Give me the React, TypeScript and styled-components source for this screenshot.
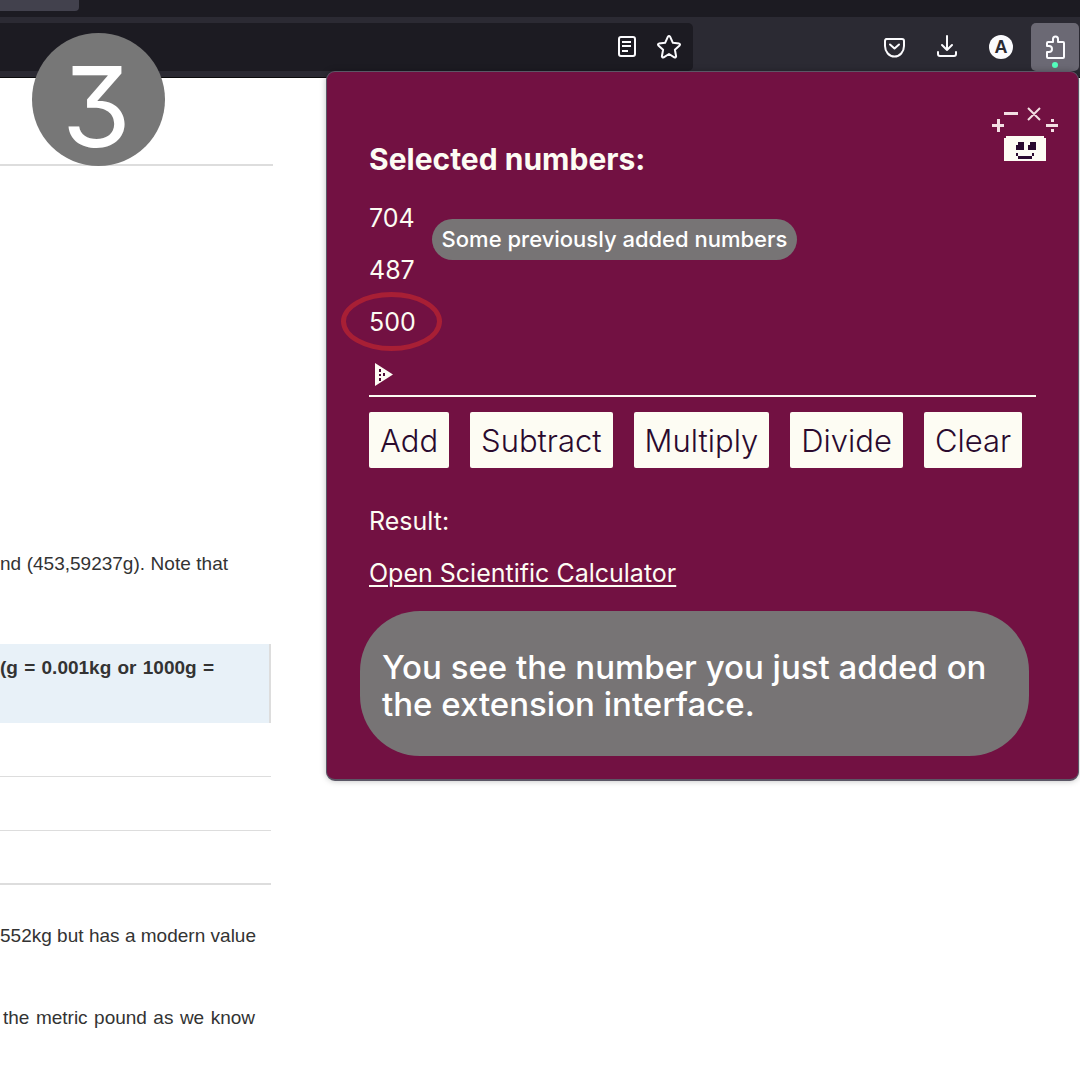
import React from "react";
import styled, { createGlobalStyle } from "styled-components";

const GlobalStyle = createGlobalStyle`
  *, *::before, *::after { box-sizing: border-box; }
  body {
    margin: 0;
    background: #ffffff;
    font-family: Inter, "Open Sans", sans-serif;
  }
  h1, p, ul { margin: 0; padding: 0; }
`;

const Browser = styled.div`
  position: relative;
  min-height: 100vh;
  overflow: hidden;
`;

const TabStrip = styled.div`
  height: 17px;
  background: #1c1b22;
`;

const ActiveTab = styled.div`
  width: 79px;
  height: 11px;
  border-radius: 0 0 4px 0;
  background: #42414d;
`;

const Toolbar = styled.header`
  display: flex;
  justify-content: space-between;
  height: 61px;
  padding: 6px 1px 6px 0;
  border-bottom: 1px solid #0c0c0d;
  background: #2b2a33;
`;

const AddressBar = styled.div`
  display: flex;
  align-items: center;
  justify-content: flex-end;
  gap: 18px;
  flex: 0 1 693px;
  height: 48px;
  padding-right: 12px;
  border-radius: 0 5px 5px 0;
  background: #1c1b22;
`;

const ToolbarActions = styled.div`
  display: flex;
  gap: 6px;
`;

const IconButton = styled.button<{ $active?: boolean; $compact?: boolean }>`
  display: flex;
  align-items: center;
  justify-content: center;
  width: ${(p) => (p.$compact ? 24 : 48)}px;
  height: 48px;
  padding: 0;
  border: 0;
  border-radius: 5px;
  background: ${(p) => (p.$active ? "#6b6974" : "transparent")};
  color: #fbfbfe;
`;

const Account = styled.span`
  display: flex;
  align-items: center;
  justify-content: center;
  width: 24px;
  height: 24px;
  border-radius: 50%;
  background: #fbfbfe;
  color: #2b2a33;
  font-size: 18px;
  font-weight: 800;
`;

const Article = styled.main`
  width: 273px;
  color: #333333;
  font-family: "Liberation Sans", Arial, sans-serif;
  font-size: 19px;
  line-height: 28px;
`;

const Masthead = styled.div`
  height: 88px;
  border-bottom: 2px solid #dddddd;
`;

const Line = styled.p<{ $space: number; $end: number; $start?: number }>`
  && {
    padding: ${(p) => p.$space}px ${(p) => p.$end}px 0 ${(p) => p.$start ?? 0}px;
  }
  text-align: justify;
  text-align-last: justify;
`;

const Callout = styled.div`
  height: 79px;
  margin: 66px 2px 0 0;
  border-right: 2px solid #dddddd;
  background: #e8f1f8;
  font-weight: 700;
`;

const Row = styled.div<{ $last?: boolean }>`
  height: 54px;
  margin-right: 2px;
  border-bottom: ${(p) => (p.$last ? 2 : 1)}px solid #dddddd;
`;

const StepBadge = styled.div`
  position: absolute;
  top: 33px;
  left: 32px;
  display: flex;
  align-items: center;
  justify-content: center;
  width: 133px;
  height: 133px;
  padding: 12px 4px 0 0;
  border-radius: 50%;
  background: #777777;
  color: #ffffff;
  font-size: 112px;
  font-weight: 400;
  line-height: 1;
  font-feature-settings: "cv09";
`;

const Popup = styled.section`
  position: absolute;
  top: 71px;
  right: 1px;
  width: 753px;
  max-width: 100%;
  padding: 71px 42px 23px;
  border: 1px solid #5b5766;
  border-bottom-width: 2px;
  border-radius: 9px;
  background: #721142;
  box-shadow: 0 0 6px rgba(0, 0, 0, 0.25);
  color: #fdfcf3;
  font-size: 25px;
  line-height: 52px;
`;

const Mascot = styled.svg`
  position: absolute;
  top: 35px;
  right: 20px;
`;

const Title = styled.h1`
  margin-bottom: 17px;
  font-size: 30px;
  font-weight: 700;
  line-height: 32px;
`;

const NumberList = styled.ul`
  list-style: none;
`;

const NumberItem = styled.li`
  position: relative;
  height: 52px;
`;

const Ring = styled.span`
  position: absolute;
  top: -4px;
  left: -28px;
  width: 101px;
  height: 59px;
  border: 5px solid #a81f35;
  border-radius: 50%;
`;

const Note = styled.div`
  position: absolute;
  top: 147px;
  left: 105px;
  width: 365px;
  border-radius: 21px;
  background: #777475;
  color: #ffffff;
  font-size: 22px;
  font-weight: 500;
  line-height: 41px;
  text-align: center;
  white-space: nowrap;
`;

const Cursor = styled.div`
  display: flex;
  align-items: center;
  height: 49px;
  padding: 6px 0 0 6px;
  border-bottom: 2px solid #fdfcf3;
`;

const Operations = styled.div`
  display: flex;
  gap: 21px;
  margin: 15px 0 27px;
`;

const Operation = styled.button`
  height: 56px;
  padding: 0 11px;
  border: 0;
  border-radius: 2px;
  background: #fdfcf3;
  color: #2a0a2e;
  font-family: inherit;
  font-size: 31px;
  font-weight: 300;
`;

const Result = styled.p`
  height: 52px;
`;

const CalculatorLink = styled.a`
  color: inherit;
  text-decoration-thickness: 2px;
  text-underline-offset: 3px;
`;

const Caption = styled.p`
  && {
    margin: 12px 7px 0 -9px;
    padding: 38px 22px 33px;
  }
  border-radius: 60px;
  background: #777475;
  color: #ffffff;
  font-size: 33px;
  font-weight: 500;
  line-height: 37px;
`;

const operations = ["Add", "Subtract", "Multiply", "Divide", "Clear"];

export default function App() {
  return (
    <Browser>
      <GlobalStyle />
      <TabStrip>
        <ActiveTab />
      </TabStrip>
      <Toolbar>
        <AddressBar>
          <IconButton $compact aria-label="Reader view">
            <svg width="24" height="24" viewBox="0 0 24 24" fill="none" stroke="currentColor" strokeWidth="2">
              <rect x="4" y="2" width="16" height="19" rx="2" />
              <path d="M7 7h9M7 11h9M7 16h6" />
            </svg>
          </IconButton>
          <IconButton $compact aria-label="Bookmark this page">
            <svg width="24" height="24" viewBox="0 0 24 24" fill="none" stroke="currentColor" strokeWidth="2" strokeLinejoin="round">
              <path d="M10.800 1.800q1.200-1.500 2.400 0l2.700 6 6.200.8q1.500.5.500 1.900l-4.700 4.300 1.200 6.500q-.2 1.600-1.800 1L12 19l-5.300 3.300q-1.600.5-1.800-1l1.200-6.500-4.700-4.300q-1-1.400.5-1.900l6.200-.8z" />
            </svg>
          </IconButton>
        </AddressBar>
        <ToolbarActions>
          <IconButton aria-label="Save to Pocket">
            <svg width="24" height="24" viewBox="0 0 24 24" fill="none" stroke="currentColor" strokeWidth="2" strokeLinecap="round" strokeLinejoin="round">
              <path d="M5 4h16q2 0 2 2v5a9 10 0 0 1-19 0V6q0-2 2-2z" />
              <path d="m9 9.500 4.500 4 4.500-4" />
            </svg>
          </IconButton>
          <IconButton aria-label="Downloads">
            <svg width="24" height="24" viewBox="0 0 24 24" fill="none" stroke="currentColor" strokeWidth="2" strokeLinecap="round" strokeLinejoin="round">
              <path d="M12 1v14M7 10l5 5 5-5M3 17v2q0 2 2 2h14q2 0 2-2v-2" />
            </svg>
          </IconButton>
          <IconButton aria-label="Account">
            <Account>A</Account>
          </IconButton>
          <IconButton $active aria-label="Extensions">
            <svg width="24" height="42" viewBox="0 0 24 42" fill="none" stroke="currentColor" strokeWidth="2" strokeLinejoin="round">
              <path d="M4 20v-3q0-1 1-1h5v-3a2.500 2.500 0 0 1 5 0v3h5q1 0 1 1v14q0 1-1 1H5q-1 0-1-1v-5h2a3 3 0 0 0 0-6z" />
              <circle cx="12" cy="39" r="3" fill="#54ffbd" stroke="none" />
            </svg>
          </IconButton>
        </ToolbarActions>
      </Toolbar>

      <Article>
        <Masthead />
        <Line $space={384} $end={45}>nd (453,59237g). Note that</Line>
        <Callout>
          <Line $space={10} $end={55}>(g = 0.001kg or 1000g =</Line>
        </Callout>
        <Row />
        <Row />
        <Row $last />
        <Line $space={37} $end={17}>552kg but has a modern value</Line>
        <Line $space={54} $end={18} $start={3}>the metric pound as we know</Line>
      </Article>

      <StepBadge>3</StepBadge>

      <Popup>
        <Mascot width="66" height="54" viewBox="0 0 66 54" aria-hidden="true">
          <g fill="#f3dfe3">
            <path d="M0 17h12v3H0zM5 12h3v13H5zM12 5h14v3H12zM54 17h12v3H54z" />
            <path d="M59 12h3v3h-3zM59 22h3v3h-3z" />
          </g>
          <path stroke="#f3dfe3" strokeWidth="2" d="m36 1 4 4M44 9l4 4M48 1l-4 4M40 9l-4 4M40 5l4 4M44 5l-4 4" />
          <path fill="#fdfcf3" d="M14 29h38v2h2v23H12V31h2z" />
          <path fill="#2a0a2e" d="M26 35h6v8h-8v-5h2zM38 35h6v8h-8v-5h2z" />
          <path fill="#2a0a2e" d="M24 46h2v3h14v-3h2v3h-2v3H26v-3h-2z" />
        </Mascot>
        <Title>Selected numbers:</Title>
        <NumberList>
          <NumberItem>704</NumberItem>
          <NumberItem>487</NumberItem>
          <NumberItem>
            500
            <Ring />
          </NumberItem>
        </NumberList>
        <Note>Some previously added numbers</Note>
        <Cursor>
          <svg width="20" height="24" viewBox="0 0 20 24" aria-hidden="true">
            <path fill="#fdfcf3" d="M0 0 18 11.500 0 23z" />
            <path fill="#4a0b35" d="M4 6h2v3H4zM4 11h2v2H4zM4 15h2v3H4zM8 10h2v3H8z" />
          </svg>
        </Cursor>
        <Operations>
          {operations.map((name) => (
            <Operation key={name}>{name}</Operation>
          ))}
        </Operations>
        <Result>Result:</Result>
        <CalculatorLink href="#calculator">Open Scientific Calculator</CalculatorLink>
        <Caption>You see the number you just added on the extension interface.</Caption>
      </Popup>
    </Browser>
  );
}
